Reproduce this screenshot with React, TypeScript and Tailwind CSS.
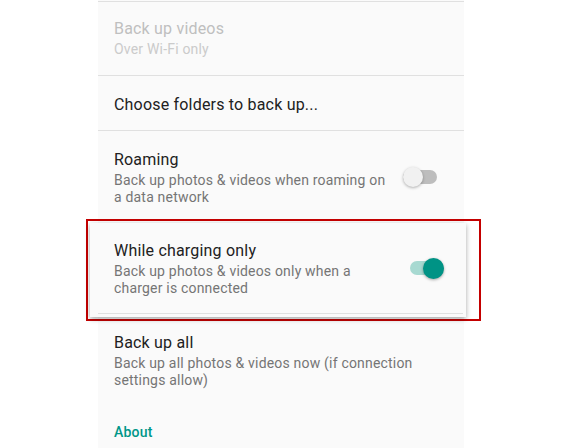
import React from "react";

function Toggle({ on }: { on: boolean }) {
  return (
    <div className="relative w-[34px] h-[20px] shrink-0">
      <div
        className={
          on
            ? "absolute left-0 right-0 top-[3px] h-[14px] rounded-full bg-[#a7d9d1]"
            : "absolute left-0 right-0 top-[3px] h-[14px] rounded-full bg-[#bdbdbd]"
        }
      />
      <div
        className={
          on
            ? "absolute right-0 top-0 w-[21px] h-[21px] rounded-full bg-[#009385] shadow-[0_1px_3px_rgba(0,0,0,0.35)]"
            : "absolute left-0 top-0 w-[20px] h-[20px] rounded-full bg-[#f1f1f1] shadow-[0_1px_3px_rgba(0,0,0,0.3)]"
        }
      />
    </div>
  );
}

function Divider() {
  return <div className="h-px bg-[#e0e0e0]" />;
}

export default function App() {
  return (
    <div className="w-[568px] h-[448px] bg-white overflow-hidden font-['Roboto',sans-serif] tracking-[0.012em]">
      <div className="ml-[98px] w-[366px] h-full bg-[#fafafa] pt-px">
        <Divider />

        <div className="h-[73px] pl-4 pt-[16px]">
          <div className="text-[16px] leading-[21px] text-[#bfbfbf]">Back up videos</div>
          <div className="mt-[2px] text-[14px] leading-[17px] text-[#cbcbcb]">Over Wi-Fi only</div>
        </div>
        <Divider />

        <div className="h-[54px] pl-4 pt-[18px]">
          <div className="text-[16px] leading-[21px] text-[#212121]">Choose folders to back up...</div>
        </div>
        <Divider />

        <div className="h-[88px] pl-4 pt-[18px] flex items-start">
          <div className="w-[272px]">
            <div className="text-[16px] leading-[21px] text-[#212121]">Roaming</div>
            <div className="mt-[2px] text-[14px] leading-[17px] text-[#757575]">
              Back up photos &amp; videos when roaming on a data network
            </div>
          </div>
          <div className="ml-[17px] mt-[18px]">
            <Toggle on={false} />
          </div>
        </div>

        <div className="ml-[-12px] w-[395px] h-[102px] border-2 border-[#c40000]">
          <div className="ml-[2px] mt-[2px] w-[376px] h-[94px] bg-[#fafafa] shadow-[0_2px_5px_rgba(0,0,0,0.35)]">
            <div className="h-[90px] pl-[24px] pt-[17px] flex items-start">
              <div className="w-[272px]">
                <div className="text-[16px] leading-[21px] text-[#212121]">While charging only</div>
                <div className="mt-[2px] text-[14px] leading-[17px] text-[#757575]">
                  Back up photos &amp; videos only when a charger is connected
                </div>
              </div>
              <div className="ml-[24px] mt-[18px]">
                <Toggle on={true} />
              </div>
            </div>
            <div className="ml-[8px] w-[365px] h-px bg-[#e0e0e0]" />
          </div>
        </div>

        <div className="pl-4 pt-[11px]">
          <div className="text-[16px] leading-[21px] text-[#212121]">Back up all</div>
          <div className="mt-[2px] w-[310px] text-[14px] leading-[17px] text-[#757575]">
            Back up all photos &amp; videos now (if connection settings allow)
          </div>
        </div>

        <div className="pl-4 pt-[35px] text-[14px] leading-[17px] font-medium text-[#009688]">About</div>
      </div>
    </div>
  );
}
